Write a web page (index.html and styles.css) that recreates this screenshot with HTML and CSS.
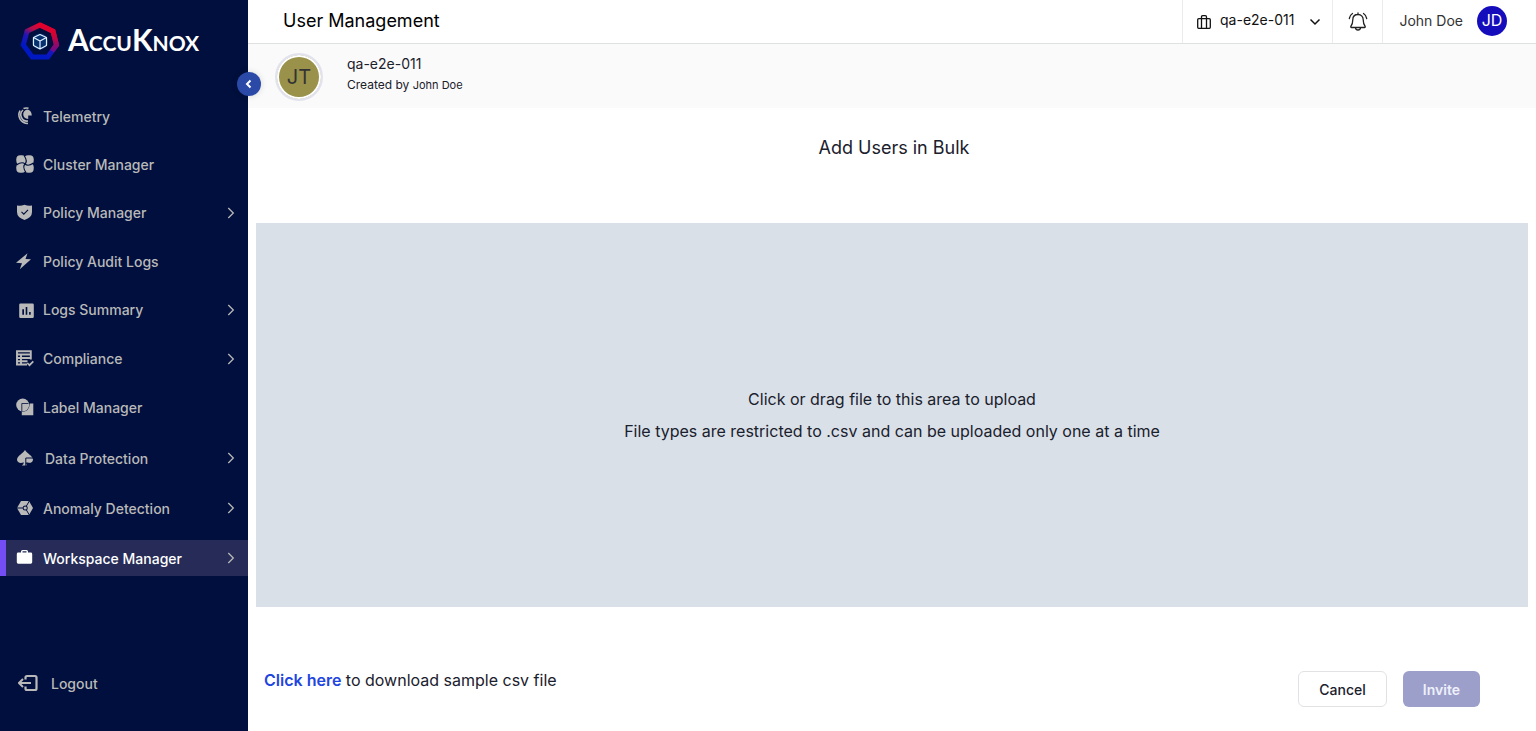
FILE: index.html
```html
<!DOCTYPE html>
<html lang="en">
<head>
<meta charset="utf-8">
<meta name="viewport" content="width=device-width, initial-scale=1">
<title>User Management</title>
<link rel="stylesheet" href="styles.css">
</head>
<body>
<div class="app">
  <aside class="sidebar">
    <a class="brand" href="#">
      <svg class="brand-mark" viewBox="0 0 40 40" aria-hidden="true">
        <defs>
          <linearGradient id="ring" x1="0.7" y1="0.1" x2="0.3" y2="0.8">
            <stop offset="0" stop-color="#e8002a"/>
            <stop offset="0.3" stop-color="#b0104c"/>
            <stop offset="0.6" stop-color="#2414b4"/>
            <stop offset="1" stop-color="#0018c4"/>
          </linearGradient>
          <linearGradient id="edge" x1="0" y1="0" x2="0" y2="1">
            <stop offset="0" stop-color="#e4002b"/>
            <stop offset="0.4" stop-color="#d00434"/>
            <stop offset="1" stop-color="#6a0c8c"/>
          </linearGradient>
        </defs>
        <path d="M20 4 33 10.200 36.500 24 27.800 36H12.200L3.300 24 7 10.200Z" fill="none" stroke="url(#ring)" stroke-width="5"/>
        <path d="M20 4 33 10.200 36.500 24 32 30" fill="none" stroke="url(#edge)" stroke-width="5"/>
        <circle cx="20" cy="20.500" r="8" fill="#07306e"/>
        <path d="M20 13.500 26.500 16.500V24.500L20 28 13.500 24.500V16.500ZM13.500 16.500 20 20 26.500 16.500M20 20V28" fill="none" stroke="#dff0ff" stroke-width="1.200" stroke-linejoin="round"/>
      </svg>
      <span class="brand-name">AccuKnox</span>
    </a>
    <nav class="nav">
      <ul class="nav-group">
        <li><a class="nav-item" href="#">
          <svg class="icon" viewBox="0 0 18 18"><path d="M11 2.500Q15.500 3 15.800 8.500H12.200V12Q7.200 11.500 7.200 7 7.500 3.500 11 2.500Z" fill="currentColor"/><path d="M7 3A6.300 6.300 0 0 0 12 14M4 3.500C1 9.500 4.500 16 12 16.500M7.500 1.500Q10 .500 12.500 1.300" fill="none" stroke="currentColor" stroke-width="1.600"/></svg>
          <span>Telemetry</span></a></li>
        <li><a class="nav-item" href="#">
          <svg class="icon" viewBox="0 0 18 18"><g fill="currentColor"><rect x=".3" y=".3" width="9.500" height="9.500" rx="4"/><rect x="8.200" y=".3" width="9.500" height="9.500" rx="4"/><rect x=".3" y="8.200" width="9.500" height="9.500" rx="4"/><rect x="8.200" y="8.200" width="9.500" height="9.500" rx="4"/></g><g fill="none" stroke="#000f3d" stroke-width="1.100"><path id="whorl" d="M9 9C11 7 10.500 4 8 .500"/><use href="#whorl" transform="rotate(90 9 9)"/><use href="#whorl" transform="rotate(180 9 9)"/><use href="#whorl" transform="rotate(270 9 9)"/></g></svg>
          <span>Cluster Manager</span></a></li>
        <li><a class="nav-item has-children" href="#">
          <svg class="icon" viewBox="0 0 18 18"><path d="M1 1.500Q5 2 8.500.800 12 2 16 1.500V8Q16 13.500 8.500 16 1 13.500 1 8Z" fill="currentColor"/><path d="m5.500 7.800 2.300 2.300L12 5.800" fill="none" stroke="#000f3d" stroke-width="1.100"/></svg>
          <span>Policy Manager</span>
          <svg class="chevron" viewBox="0 0 8 12"><path d="m1.300 1 5 5-5 5"/></svg></a></li>
        <li><a class="nav-item" href="#">
          <svg class="icon" viewBox="0 0 18 18"><path d="M11.500 1.300 0 10.800 6 11.300 3.800 17.300 15 7.300 9.500 7Z" fill="currentColor"/></svg>
          <span>Policy Audit Logs</span></a></li>
        <li><a class="nav-item has-children" href="#">
          <svg class="icon" viewBox="0 0 18 18"><path fill="currentColor" fill-rule="evenodd" d="M4.500 2.500h12q1.300 0 1.300 1.300v12q0 1.300-1.300 1.300h-12q-1.300 0-1.300-1.300v-12q0-1.300 1.300-1.300ZM6.300 8.300v5.500H8V8.300ZM9.700 6v7.800h1.600V6Zm3.400 5v2.800h1.600V11Z"/></svg>
          <span>Logs Summary</span>
          <svg class="chevron" viewBox="0 0 8 12"><path d="m1.300 1 5 5-5 5"/></svg></a></li>
        <li><a class="nav-item has-children" href="#">
          <svg class="icon" viewBox="0 0 18 18"><path d="M14.800 9.500V1.200H1V14.500H11M1 4.500H15M1 8H15M1 11.300H11.500M5 4V15" fill="none" stroke="currentColor" stroke-width="1.900"/><path d="m11.300 13 2.200 2.200 3.800-3.900" fill="none" stroke="currentColor" stroke-width="1.700"/></svg>
          <span>Compliance</span>
          <svg class="chevron" viewBox="0 0 8 12"><path d="m1.300 1 5 5-5 5"/></svg></a></li>
        <li><a class="nav-item" href="#">
          <svg class="icon" viewBox="0 0 18 18"><circle cx="6.700" cy="7" r="6.500" fill="currentColor"/><path d="M13.800 5.500H17.300V17.200H5.800V14Q13.500 13.500 13.800 5.500Z" fill="currentColor"/><path d="M5.800 13V5.500H12.500" fill="none" stroke="#000f3d" stroke-width=".8"/></svg>
          <span>Label Manager</span></a></li>
      </ul>
      <ul class="nav-group nav-group-late">
        <li><a class="nav-item" href="#">
          <svg class="icon" viewBox="0 0 18 18"><path d="M9 1C10.500 4 16.500 6.500 17 10.500 17 13.500 13.500 15 10.500 13.200V16.500H5.800Q7.800 15.500 7.800 13.200C4.500 15 1 13.500 1 10.500 1.500 6.500 7.500 4 9 1Z" fill="currentColor"/><path d="M9.800 17V9H17.500M9.800 14.300h4" fill="none" stroke="#000f3d" stroke-width="1"/></svg>
          <span class="label-indent">Data Protection</span>
          <svg class="chevron" viewBox="0 0 8 12"><path d="m1.300 1 5 5-5 5"/></svg></a></li>
        <li><a class="nav-item" href="#">
          <svg class="icon" viewBox="0 0 18 18"><path d="M5 2H13L17 9 13 16H5L1 9Z" fill="currentColor"/><path d="M1 9H7M10.300 7.200 13.300 2M10.300 10.800 13.300 16" stroke="#000f3d" stroke-width="1"/><circle cx="9.200" cy="9" r="2.500" fill="#000f3d"/><circle cx="9.200" cy="9" r="1.600" fill="currentColor"/></svg>
          <span>Anomaly Detection</span>
          <svg class="chevron" viewBox="0 0 8 12"><path d="m1.300 1 5 5-5 5"/></svg></a></li>
        <li><a class="nav-item active" href="#" aria-current="page">
          <svg class="icon" viewBox="0 0 18 18"><path fill="currentColor" fill-rule="evenodd" d="M5 3.500V2.500Q5 1 6.500 1h4Q12 1 12 2.500v1h2.800q1.400 0 1.400 1.400v8.400q0 1.400-1.400 1.400H2.200q-1.400 0-1.400-1.400V4.900q0-1.400 1.400-1.400ZM6.500 3.500h4V2.300h-4Z"/></svg>
          <span>Workspace Manager</span>
          <svg class="chevron" viewBox="0 0 8 12"><path d="m1.300 1 5 5-5 5"/></svg></a></li>
      </ul>
    </nav>
    <button class="logout" type="button">
      <svg class="logout-icon" viewBox="0 0 22 18"><path d="M7.500 5.500V3.500Q7.500 2 9 2H17Q18.500 2 18.500 3.500V14.500Q18.500 16 17 16H9Q7.500 16 7.500 14.500V12.500" fill="none" stroke="currentColor" stroke-width="2.200"/><path d="M13 9H1M5 5 1 9 5 13" fill="none" stroke="currentColor" stroke-width="2"/></svg>
      <span>Logout</span>
    </button>
    <button class="collapse" type="button" aria-label="Collapse sidebar">
      <svg viewBox="0 0 24 24"><path d="M13.500 8.500 10 12l3.500 3.500" fill="none" stroke="#fff" stroke-width="2"/></svg>
    </button>
  </aside>

  <div class="page">
    <header class="topbar">
      <h1 class="title">User Management</h1>
      <button class="workspace" type="button">
        <svg class="case" viewBox="0 0 14 14"><path d="M1.700 3.700H12.300Q13.300 3.700 13.300 4.700V12.300Q13.300 13.300 12.300 13.300H1.700Q.700 13.300.700 12.300V4.700Q.700 3.700 1.700 3.700ZM4.500 13V2Q4.500.700 5.700.700H8.300Q9.500.700 9.500 2V13" fill="none" stroke="#111" stroke-width="1.300"/></svg>
        <span>qa-e2e-011</span>
        <svg class="caret" viewBox="0 0 12 8"><path d="m1.500 1.500 4.500 4.500 4.500-4.500" fill="none" stroke="#111" stroke-width="1.500"/></svg>
      </button>
      <button class="bell" type="button" aria-label="Notifications">
        <svg viewBox="0 0 20 20"><path d="M10 2.500C6.500 2.500 4.800 5 4.800 7.800 4.800 11.500 4 13 2.800 14.500Q2.500 15.500 3.500 15.500H16.500Q17.500 15.500 17.200 14.500C16 13 15.200 11.500 15.200 7.800 15.200 5 13.500 2.500 10 2.500ZM10 2.500V1M7.500 15.500a2.500 2.500 0 0 0 5 0M4.500 1.500Q2 3 1.300 6.500M15.500 1.500Q18 3 18.700 6.500" fill="none" stroke="#222" stroke-width="1.300" stroke-linecap="round"/></svg>
      </button>
      <div class="account">
        <span class="account-name">John Doe</span>
        <span class="account-badge">JD</span>
      </div>
    </header>

    <section class="owner">
      <div class="owner-avatar">JT</div>
      <div class="owner-text">
        <div class="owner-name">qa-e2e-011</div>
        <div class="owner-by">Created by <span class="owner-who">John Doe</span></div>
      </div>
    </section>

    <main class="content">
      <h2 class="heading">Add Users in Bulk</h2>
      <button class="dropzone" type="button">
        <span>Click or drag file to this area to upload</span>
        <span>File types are restricted to .csv and can be uploaded only one at a time</span>
      </button>
      <footer class="actions">
        <p class="sample"><a href="#">Click here</a> to download sample csv file</p>
        <div class="buttons">
          <button class="btn btn-outline" type="button">Cancel</button>
          <button class="btn btn-primary" type="button" disabled>Invite</button>
        </div>
      </footer>
    </main>
  </div>
</div>
</body>
</html>
```
FILE: styles.css
```css
* { box-sizing: border-box; }
body {
  margin: 0;
  font-family: Inter, "Liberation Sans", sans-serif;
  font-size: 14px;
  color: #1a202c;
  background: #fff;
}
h1, h2, p, ul { margin: 0; padding: 0; font-weight: 400; }
ul { list-style: none; }
button { font: inherit; color: inherit; background: none; border: 0; padding: 0; cursor: pointer; }
a { text-decoration: none; }
svg { display: block; flex: none; }

.app { display: flex; min-height: 100vh; }

.sidebar {
  position: relative;
  flex: none;
  width: 248px;
  display: flex;
  flex-direction: column;
  background: #000f3d;
  color: #b9b9b9;
}
.brand { display: flex; align-items: center; gap: 8px; height: 81px; padding-left: 20px; color: #fff; }
.brand-mark { width: 40px; height: 40px; }
.brand-name { padding-bottom: 3px; font-family: Lato, sans-serif; font-weight: 700; font-size: 30px; font-variant: small-caps; }

.nav { padding-top: 17px; }
.nav-group { display: flex; flex-direction: column; gap: 12px; }
.nav-group-late { gap: 14px; margin-top: 15px; }
.nav-item {
  display: flex;
  align-items: center;
  height: 36px;
  padding: 0 13px 0 16px;
  color: inherit;
  font-size: 14px;
  font-weight: 500;
}
.nav-item.has-children { height: 37px; }
.nav-item span { flex: 1; margin-left: 9px; }
.nav-item .label-indent { margin-left: 11px; }
.icon { width: 18px; height: 18px; }
.chevron { width: 8px; height: 12px; fill: none; stroke: #b9b9b9; stroke-width: 1.3; }
.nav-item.active { padding-left: 10px; border-left: 6px solid #754df5; background: #262c57; color: #fff; }

.logout { display: flex; align-items: center; gap: 11px; margin-top: auto; padding: 0 18px; margin-bottom: 39px; font-weight: 500; }
.logout-icon { width: 22px; height: 18px; }

.collapse { position: absolute; top: 72px; right: -13px; width: 24px; height: 24px; border-radius: 50%; background: #2b49a7; box-shadow: 0 0 6px rgba(0, 0, 0, 0.15); }

.page { flex: 1; min-width: 0; display: flex; flex-direction: column; }

.topbar { display: flex; height: 44px; border-bottom: 1px solid #dfe1e1; color: #111; }
.title { flex: 1; padding-left: 35px; font-size: 18px; line-height: 41px; color: #000; }
.workspace { display: flex; align-items: center; padding: 0 11px 4px 14px; border-left: 1px solid #ececec; }
.case { width: 14px; height: 14px; margin: 4px 9px 0 0; }
.caret { width: 12px; height: 8px; margin: 4px 0 0 15px; }
.bell { width: 50px; display: flex; align-items: center; justify-content: center; border-left: 1px solid #ececec; }
.bell svg { width: 20px; height: 20px; }
.account { display: flex; align-items: center; gap: 14px; padding: 0 29px 2px 16px; border-left: 1px solid #ececec; }
.account-name { color: #333; }
.account-badge { width: 30px; height: 30px; border-radius: 50%; background: #150dbc; color: #fff; font-size: 16px; line-height: 28px; text-align: center; }

.owner { display: flex; align-items: center; gap: 24px; height: 64px; padding: 2px 0 0 27px; background: #fafafa; }
.owner-avatar {
  width: 48px;
  height: 48px;
  border: 2px solid #e2e2ee;
  border-radius: 50%;
  background: #9a914a;
  background-clip: padding-box;
  box-shadow: inset 0 0 0 2px #fff;
  font-size: 20px;
  line-height: 44px;
  text-align: center;
  color: #333;
}
.owner-text { padding-bottom: 6px; }
.owner-name { font-size: 14px; line-height: 22px; }
.owner-by { font-size: 12px; line-height: 20px; }
.owner-who { font-size: 11px; }

.content { flex: 1; display: flex; flex-direction: column; padding: 0 8px; }
.heading { padding: 28px 0 0 4px; font-size: 18px; line-height: 24px; text-align: center; }
.dropzone {
  flex: 1;
  margin-top: 63px;
  display: flex;
  flex-direction: column;
  align-items: center;
  justify-content: center;
  background: #d9e0e8;
  font-size: 16px;
  line-height: 32px;
}
.actions { display: flex; justify-content: space-between; padding: 64px 48px 24px 8px; }
.sample { font-size: 16px; line-height: 18px; }
.sample a { color: #2245e0; font-weight: 600; }
.buttons { display: flex; gap: 16px; }
.btn { height: 36px; padding: 0 20px; border-radius: 6px; font-weight: 500; }
.btn-outline { border: 1px solid #e2e2e5; }
.btn-primary { background: #9c9fca; color: #eef0fb; font-weight: 600; cursor: default; }
```
